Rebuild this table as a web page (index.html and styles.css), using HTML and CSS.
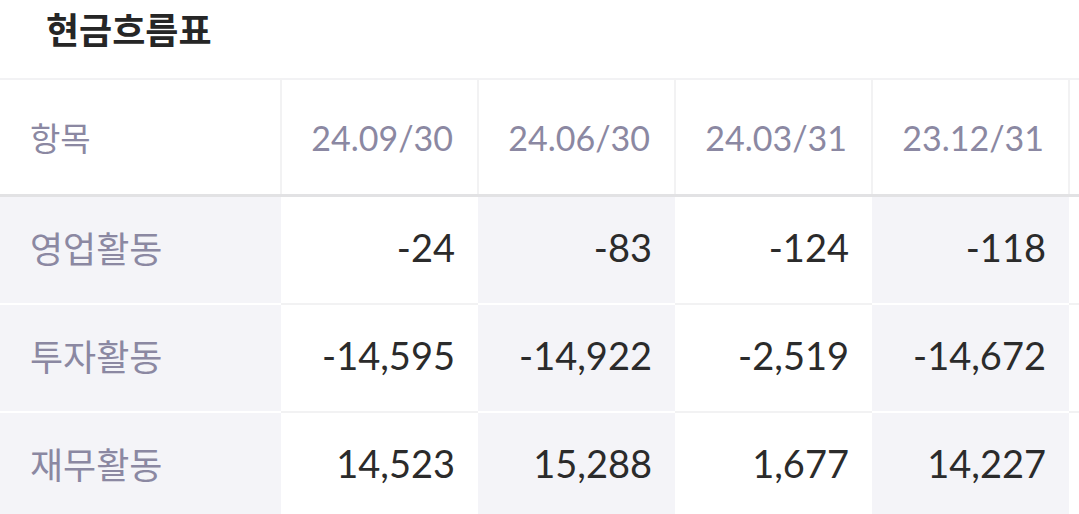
FILE: index.html
```html
<!DOCTYPE html>
<html lang="ko">
<head>
<meta charset="utf-8">
<title>현금흐름표</title>
<link rel="stylesheet" href="styles.css">
</head>
<body>
<div class="page">
  <h2 class="title">현금흐름표</h2>
  <div class="table-wrap">
    <table class="cf">
      <colgroup>
        <col class="c-label">
        <col class="c-val"><col class="c-val"><col class="c-val"><col class="c-val"><col class="c-val">
      </colgroup>
      <thead>
        <tr>
          <th class="label">항목</th>
          <th>24.09/30</th>
          <th>24.06/30</th>
          <th>24.03/31</th>
          <th>23.12/31</th>
          <th></th>
        </tr>
      </thead>
      <tbody>
        <tr>
          <td class="label">영업활동</td>
          <td>-24</td>
          <td class="alt">-83</td>
          <td>-124</td>
          <td class="alt">-118</td>
          <td></td>
        </tr>
        <tr>
          <td class="label">투자활동</td>
          <td>-14,595</td>
          <td class="alt">-14,922</td>
          <td>-2,519</td>
          <td class="alt">-14,672</td>
          <td></td>
        </tr>
        <tr>
          <td class="label">재무활동</td>
          <td>14,523</td>
          <td class="alt">15,288</td>
          <td>1,677</td>
          <td class="alt">14,227</td>
          <td></td>
        </tr>
      </tbody>
    </table>
  </div>
</div>
</body>
</html>
```

FILE: styles.css
```css
html, body {
  margin: 0;
  padding: 0;
  background: #ffffff;
}

body {
  font-family: "Lato", "Noto Sans CJK KR", sans-serif;
  overflow: hidden;
}

.page {
  width: 1079px;
  overflow: hidden;
}

.title {
  margin: 0;
  height: 78px;
  padding: 4px 0 0 46px;
  box-sizing: border-box;
  font-family: "Noto Sans CJK KR", sans-serif;
  font-weight: 700;
  font-size: 36px;
  line-height: 48px;
  color: #262626;
}

.table-wrap {
  width: 1079px;
  overflow: hidden;
}

.cf {
  border-collapse: collapse;
  table-layout: fixed;
  width: 1267px;
  border-top: 2px solid #f2f2f4;
}

.c-label { width: 281px; }
.c-val { width: 197px; }

.cf th {
  height: 114px;
  padding: 0 24px 0 0;
  text-align: right;
  font-weight: 400;
  font-size: 34px;
  color: #8b88a2;
  border-right: 2px solid #f2f2f3;
  border-bottom: 3px solid #e2e2e4;
  vertical-align: middle;
}

.cf th.label {
  text-align: left;
  padding-left: 30px;
  font-family: "Noto Sans CJK KR", sans-serif;
  font-size: 33px;
}

.cf td {
  height: 100px;
  padding: 0 23px 6px 0;
  text-align: right;
  font-size: 38px;
  line-height: 46px;
  color: #2b2b2b;
  background: #ffffff;
  border-bottom: 2px solid #f2f2f3;
  vertical-align: middle;
}

.cf td.alt {
  background: #f4f4f8;
  border-bottom-color: #ffffff;
}

.cf td.label {
  text-align: left;
  padding-left: 30px;
  font-family: "Noto Sans CJK KR", sans-serif;
  font-size: 36px;
  color: #8b88a2;
  background: #f4f4f8;
  border-bottom-color: #ffffff;
}
```
